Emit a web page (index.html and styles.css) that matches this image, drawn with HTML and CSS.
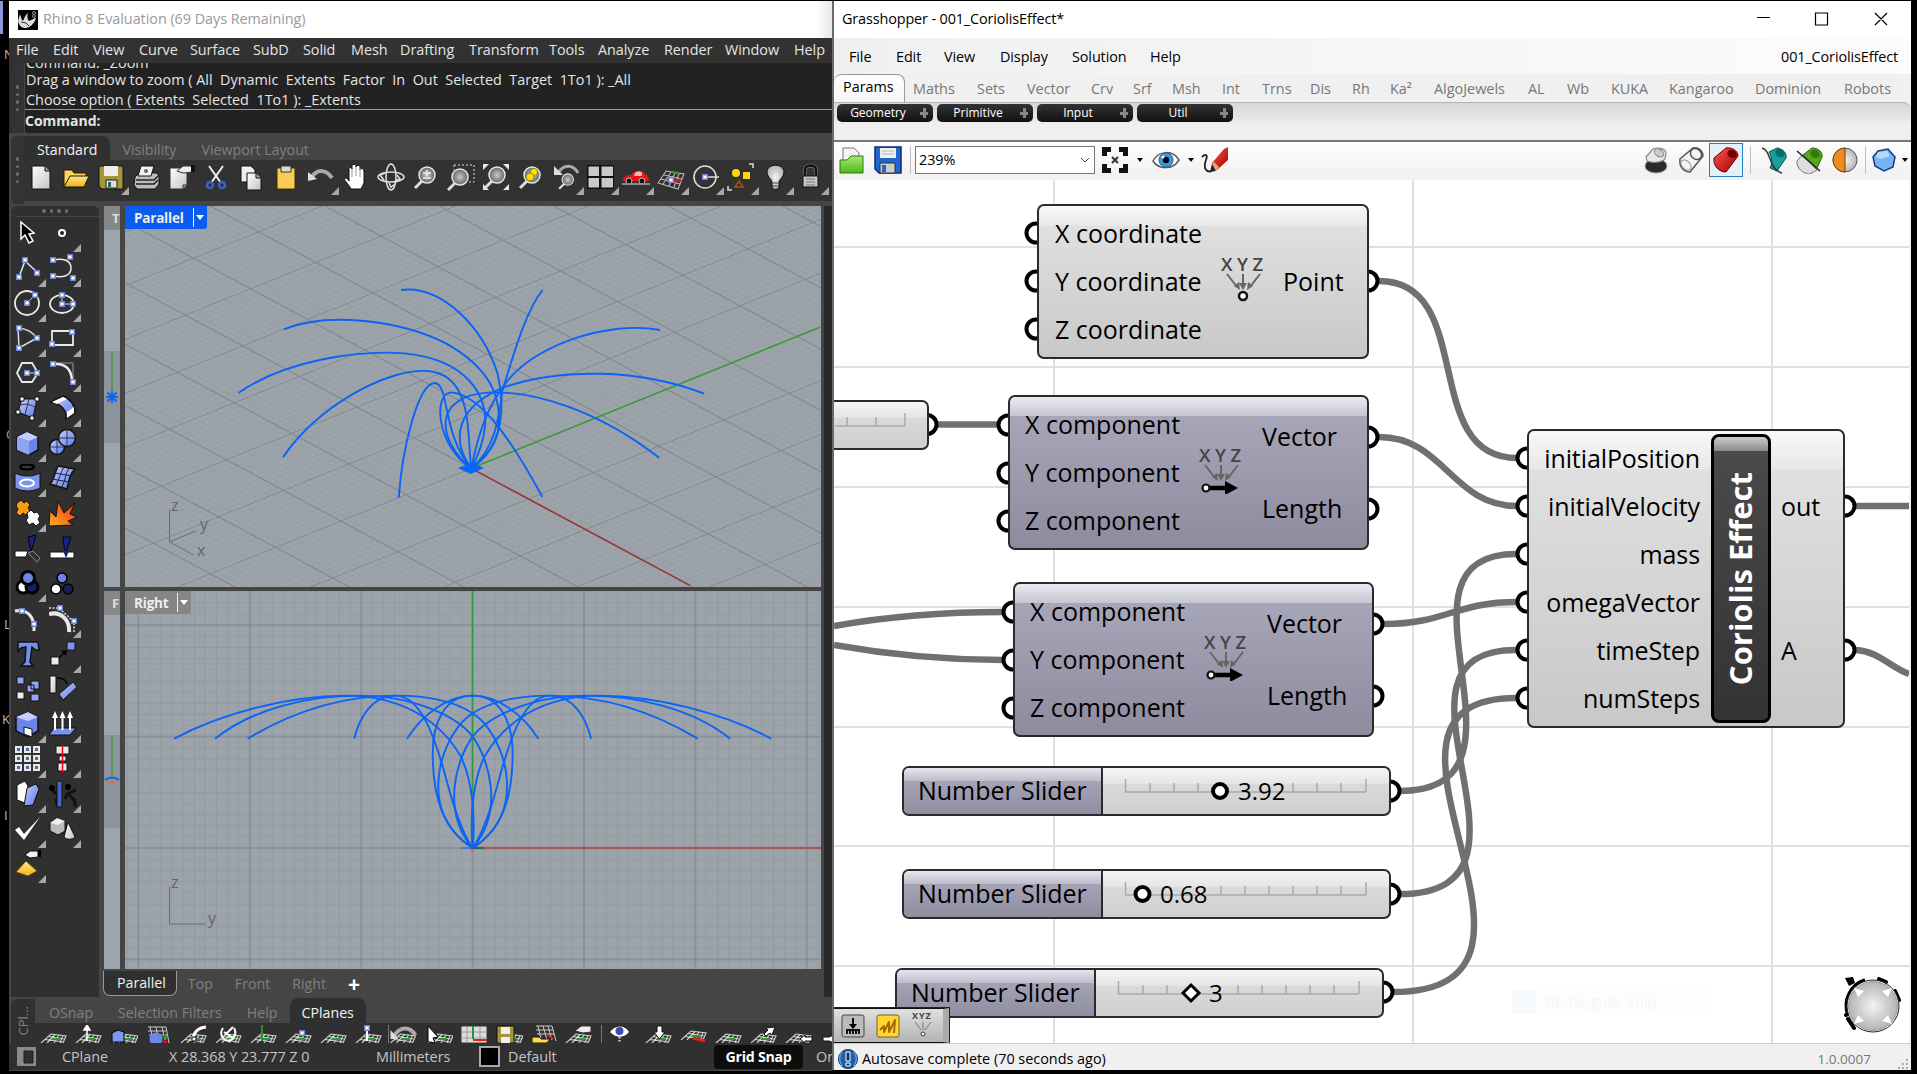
FILE: index.html
```html
<!DOCTYPE html>
<html lang="en">
<head>
<meta charset="utf-8">
<title>Rhino 8 and Grasshopper</title>
<link rel="stylesheet" href="styles.css">
</head>
<body>
<svg class="defs" width="0" height="0">
  <defs>
    <linearGradient id="gBlue" x1="0" y1="0" x2="1" y2="1"><stop offset="0" stop-color="#c3ceff"/><stop offset="1" stop-color="#5d78e6"/></linearGradient>
    <linearGradient id="gWhite" x1="0" y1="0" x2="1" y2="1"><stop offset="0" stop-color="#fff"/><stop offset="1" stop-color="#c4c4c4"/></linearGradient>
    <linearGradient id="gGold" x1="0" y1="0" x2="0" y2="1"><stop offset="0" stop-color="#ffe48a"/><stop offset="1" stop-color="#f0b41c"/></linearGradient>
    <linearGradient id="gFire" x1="1" y1="0" x2="0" y2="1"><stop offset="0" stop-color="#f02a00"/><stop offset="1" stop-color="#ffb02e"/></linearGradient>
    <linearGradient id="gGreen" x1="0" y1="0" x2="0" y2="1"><stop offset="0" stop-color="#a8ea70"/><stop offset="1" stop-color="#4fb51e"/></linearGradient>
    <linearGradient id="gRed" x1="0" y1="0" x2="1" y2="1"><stop offset="0" stop-color="#ff5548"/><stop offset="1" stop-color="#a00000"/></linearGradient>
    <radialGradient id="gLens"><stop offset="0" stop-color="#c8c8c8"/><stop offset="1" stop-color="#666"/></radialGradient>
    <radialGradient id="gKnob"><stop offset="0" stop-color="#f4f4f4"/><stop offset="1" stop-color="#b4b4b4"/></radialGradient>
    <symbol id="handle" viewBox="0 0 6 6"><path d="M.7.7h4.6v4.6H.7z" fill="#fff" stroke="#6d83d6" stroke-width="1.4"/></symbol>
    <symbol id="cgrid" viewBox="0 0 28 18"><path d="M1 18 11 9l15 2-3 7M5 14.500l19 2.500M8 11.500l17 2.500M7 18l8-8.500M14 18l5-8M20 18l3-7.500" fill="none" stroke="#d2d2d2" stroke-width="1.100"/><path d="M12 14l8 0" stroke="#2a9a32" stroke-width="2"/></symbol>
    <symbol id="lens" viewBox="0 0 28 28"><path d="M11 17 3 25" stroke="#ddd" stroke-width="3"/><circle cx="15" cy="12" r="8" fill="url(#gLens)" stroke="#e6e6e6" stroke-width="1.500"/></symbol>
    <symbol id="xyz" viewBox="0 0 44 48"><g stroke="#666" stroke-width="2" fill="none"><path d="M6 19 16 32M22 19v12M39 19 29 32"/></g><path d="m19 35-6-4 5-4zM22 35l-4-7h8zM26 35l6-4-5-4z" fill="#666"/></symbol>
    <symbol id="vecarrow" viewBox="0 0 44 48"><path d="M8 42h20" stroke="#000" stroke-width="4.500"/><path d="m26 35 13 7-13 7z"/><circle cx="7" cy="42" r="3.500" fill="#fff" stroke="#111" stroke-width="2.200"/></symbol>
  </defs>
</svg>

<div class="desktop">
  <div class="backdrop"><i class="sliver"></i><b class="l1">N</b><b class="l2">C</b><b class="l3">L</b><b class="l4">K</b><b class="l5">I</b></div>

  <section class="rhino">
    <header class="title-bar">
      <svg class="rhino-logo" viewBox="0 0 20 20"><path d="M0 0h20v20H0z" fill="#000"/><path d="M2 4c1 3 1 5 3 7 1-2 2-6 5-8-1 3-1 6 1 8 3-1 5-3 7-3-1 5-6 10-11 10-4 0-6-3-7-7z" fill="#ddd"/><path d="M3 12l5 1 3 3" stroke="#333" fill="none"/><circle cx="16" cy="3" r="1.500" fill="none" stroke="#999"/><circle cx="16" cy="6" r="1.500" fill="none" stroke="#999"/></svg>
      <span>Rhino 8 Evaluation (69 Days Remaining)</span>
    </header>
    <nav class="rhino-menu"><span>File</span><span>Edit</span><span>View</span><span>Curve</span><span>Surface</span><span>SubD</span><span>Solid</span><span>Mesh</span><span>Drafting</span><span>Transform</span><span>Tools</span><span>Analyze</span><span>Render</span><span>Window</span><span>Help</span></nav>
    <div class="command">
      <div class="grip"><i></i><i></i><i></i><i></i></div>
      <div class="history">
        <p class="old">Command: _Zoom</p>
        <p>Drag a window to zoom ( All&nbsp; Dynamic&nbsp; Extents&nbsp; Factor&nbsp; In&nbsp; Out&nbsp; Selected&nbsp; Target&nbsp; 1To1 ): _All</p>
        <p>Choose option ( Extents&nbsp; Selected&nbsp; 1To1 ): _Extents</p>
        <p class="prompt">Command:</p>
      </div>
    </div>
    <div class="toolbars">
      <div class="grip"><i></i><i></i><i></i><i></i></div>
      <div class="toolbar-main">
        <div class="tabs top-tabs"><span class="on">Standard</span><span>Visibility</span><span>Viewport Layout</span></div>
        <div class="tools">
          <span class="tool"><svg viewBox="0 0 28 28"><path d="M5 3h13l5 5v18H5z" fill="url(#gWhite)" stroke="#111"/><path d="M18 3v5h5" fill="#999" stroke="#111"/></svg></span>
          <span class="tool"><svg viewBox="0 0 28 28"><path d="M2 24V7h8l2 3h12v14z" fill="#ffd75a" stroke="#221800"/><path d="m2 24 6-11h19l-5 11z" fill="url(#gGold)" stroke="#221800"/></svg></span>
          <span class="tool more"><svg viewBox="0 0 28 28"><path d="M2 3h24v23H5l-3-3z" fill="#a5963c" stroke="#111"/><path d="M7 3h14v10H7z" fill="#eee"/><path d="M9 17h11v8H9z" fill="#ddd" stroke="#222"/><path d="M11 19h3v5h-3z" fill="#365"/></svg></span>
          <span class="tool"><svg viewBox="0 0 28 28"><path d="M3 14l4-4h18l2 3v8l-4 5H5l-3-4z" fill="#bdbdbd" stroke="#111"/><path d="M9 3h13l-3 10H6z" fill="#f2f2f2" stroke="#111"/><path d="M4 17h18l4-4M4 21h18l4-4" stroke="#222" stroke-width="1.500" fill="none"/><circle cx="14" cy="8" r="2" fill="#666"/></svg></span>
          <span class="tool"><svg viewBox="0 0 28 28"><path d="M3 5h17v17l-4 4H3z" fill="url(#gWhite)" stroke="#333"/><path d="M20 22h-4v4" fill="#999" stroke="#333"/><path d="m10 8 6-5 9 0v6l-8 1-4-1z" fill="#eee" stroke="#333"/><path d="M24 2h4v7h-4z" fill="#111"/></svg></span>
          <span class="tool"><svg viewBox="0 0 28 28"><path d="m7 3 12 17M21 3 9 20" stroke="#eee" stroke-width="2"/><g fill="none" stroke="#3a62c4" stroke-width="2.500"><circle cx="8" cy="22" r="3"/><circle cx="20" cy="22" r="3"/></g></svg></span>
          <span class="tool"><svg viewBox="0 0 28 28"><path d="M4 3h10l4 4v12H4z" fill="#eee" stroke="#111"/><path d="M10 10h9l5 5v12H10z" fill="url(#gWhite)" stroke="#111"/><path d="M19 10v5h5" fill="#aaa" stroke="#111"/></svg></span>
          <span class="tool"><svg viewBox="0 0 28 28"><path d="M5 5h18v21H5z" fill="#f8cd55" stroke="#422c00"/><path d="M9 3h10v6H9z" fill="#ddd" stroke="#333"/></svg></span>
          <span class="tool more"><svg viewBox="0 0 28 28"><path d="M5 14C10 6 19 6 25 15" fill="none" stroke="#aaa" stroke-width="4"/><path d="M1 9v9l9-2z" fill="#ddd"/></svg></span>
          <span class="tool"><svg viewBox="0 0 28 28"><path d="M9 26c-2-4-6-8-7-10 2-2 4 0 5 2V6c0-2 3-2 3 0V3c0-2 4-2 4 0v1c0-2 4-2 4 0v3c0-2 4-2 4 1v12l-3 6z" fill="#fff" stroke="#111"/><path d="M10 6v8M14 4v9M18 5v9" stroke="#999"/></svg></span>
          <span class="tool"><svg viewBox="0 0 28 28" fill="none" stroke="#e2e2e2" stroke-width="1.500"><ellipse cx="14" cy="14" rx="13" ry="5"/><ellipse cx="14" cy="14" rx="5" ry="13"/><path d="M8 10l-5 2 4 5M18 18l5-2-3-4M12 20l2 4 4-3"/></svg></span>
          <span class="tool"><svg viewBox="0 0 28 28"><use href="#lens"/><path d="M11 10h8M15 7v6M11 15h8" stroke="#eee" stroke-width="1.500"/></svg></span>
          <span class="tool"><svg viewBox="0 0 28 28"><path d="M7 2h20v17H18M7 2v5" fill="none" stroke="#ddd" stroke-dasharray="2 2"/><use href="#lens" x="-2" y="2"/></svg></span>
          <span class="tool"><svg viewBox="0 0 28 28"><use href="#lens"/><path d="M1 1h6L1 7zM27 1v6l-6-6zM27 27h-6l6-6zM1 27v-6l6 6z" fill="#e6e6e6"/></svg></span>
          <span class="tool"><svg viewBox="0 0 28 28"><use href="#lens"/><circle cx="17" cy="9" r="3.500" fill="#ffe000" stroke="#665500" stroke-width=".5"/><circle cx="13" cy="14" r="3.800" fill="#ffe000" stroke="#665500" stroke-width=".5"/></svg></span>
          <span class="tool more"><svg viewBox="0 0 28 28"><path d="M6 10C12 0 22 2 26 10" fill="none" stroke="#aaa" stroke-width="3"/><path d="M2 3v9h9z" fill="#ddd"/><use href="#lens" x="5" y="8" width="20" height="20"/></svg></span>
          <span class="tool more"><svg viewBox="0 0 28 28"><path d="M0 2h27v24H0z" fill="#111"/><path d="M1.500 3.500H12v9.500H1.500zM14.500 3.500H26v9.500H14.500zM1.500 15H12v9.500H1.500zM14.500 15H26v9.500H14.500z" fill="#c9c9c9"/></svg></span>
          <span class="tool more"><svg viewBox="0 0 28 28"><path d="M1 18c0-5 4-6 8-6 3-5 12-6 14-1 3 1 4 4 4 7z" fill="#e8141c"/><path d="M13 10c2-2 6-2 7 0v3h-8z" fill="#f8b8b8"/><circle cx="7" cy="18" r="3" fill="#111" stroke="#bbb"/><circle cx="20" cy="18" r="3" fill="#111" stroke="#bbb"/><path d="M0 21h28" stroke="#888" stroke-width="2"/></svg></span>
          <span class="tool more"><svg viewBox="0 0 28 28"><path d="m1 20 8-12 18 3-6 15zM4 16l19 5M7 12l18 4M6 21l8-12M12 23l6-13M17 24l5-13" fill="none" stroke="#bbb" stroke-width="1.100"/><path d="M14 9l8 1" stroke="#2aa32a" stroke-width="2"/><path d="m17 18 7-1" stroke="#d01818" stroke-width="3"/><use href="#handle" x="11" y="14" width="6" height="6"/></svg></span>
          <span class="tool more"><svg viewBox="0 0 28 28"><circle cx="13" cy="14" r="11" fill="none" stroke="#ddd" stroke-width="1.500"/><path d="M13 14h14" stroke="#ddd" stroke-width="1.500"/><use href="#handle" x="10" y="11" width="6" height="6"/></svg></span>
          <span class="tool more"><svg viewBox="0 0 28 28"><path d="M22 1h4v4M5 27H1v-4" fill="none" stroke="#ddd" stroke-width="1.500"/><circle cx="9" cy="10" r="4" fill="#ffd800"/><path d="M16 9h7v7h-7z" fill="#ffd800"/><path d="m12 18 4 6H8z" fill="none" stroke="#a5560c" stroke-width="1.500"/></svg></span>
          <span class="tool more"><svg viewBox="0 0 28 28"><path d="M10 19c-1-4-5-5-5-10C5 0 22 0 22 9c0 5-4 6-5 10v5c0 3-7 3-7 0z" fill="url(#gKnob)" stroke="#111"/><path d="M10 20h7M10 23h7" stroke="#444"/></svg></span>
          <span class="tool more"><svg viewBox="0 0 28 28"><path d="M8 14V7c0-6 11-6 11 0v7" fill="none" stroke="#777" stroke-width="4"/><path d="M8 14V7c0-6 11-6 11 0v7" fill="none" stroke="#111" stroke-width="2.500"/><path d="M6 13h15v11H6z" fill="#c8c8c8" stroke="#111"/><path d="M9 16h9M9 19h9M9 22h9" stroke="#777"/></svg></span>
        </div>
      </div>
    </div>

    <div class="workspace">
      <aside class="palette">
        <div class="grip flat"><i></i><i></i><i></i><i></i></div>
        <div class="palette-grid">
          <span class="tool"><svg viewBox="0 0 28 28"><path d="M7 3v17l4-4 4 8 4-2-4-7 5-1z" fill="#000" stroke="#fff" stroke-width="1.500"/></svg></span>
          <span class="tool more"><svg viewBox="0 0 28 28"><circle cx="13" cy="14" r="3" fill="#222" stroke="#fff" stroke-width="2"/></svg></span>
          <span class="tool more"><svg viewBox="0 0 28 28"><path d="M5 23 11 7l12 11" fill="none" stroke="#e8e8e8" stroke-width="1.500"/><use href="#handle" x="2" y="20" width="6" height="6"/><use href="#handle" x="8" y="3" width="6" height="6"/><use href="#handle" x="20" y="16" width="6" height="6"/></svg></span>
          <span class="tool more"><svg viewBox="0 0 28 28"><path d="M4 6c10-2 18 0 18 8s-8 10-18 8" fill="none" stroke="#e8e8e8" stroke-width="1.500"/><use href="#handle" x="1" y="3" width="6" height="6"/><use href="#handle" x="18" y="0" width="6" height="6"/><use href="#handle" x="1" y="19" width="6" height="6"/><use href="#handle" x="21" y="21" width="6" height="6"/></svg></span>
          <span class="tool more"><svg viewBox="0 0 28 28"><circle cx="13" cy="14" r="12" fill="none" stroke="#e8e8e8" stroke-width="1.800"/><path d="m14 13 7-7" stroke="#ddd"/><use href="#handle" x="10" y="11" width="6" height="6"/><use href="#handle" x="18" y="3" width="6" height="6"/></svg></span>
          <span class="tool more"><svg viewBox="0 0 28 28"><ellipse cx="13" cy="15" rx="12" ry="9" fill="none" stroke="#e8e8e8" stroke-width="1.800"/><path d="M13 6v9h12" fill="none" stroke="#ddd"/><use href="#handle" x="10" y="3" width="6" height="6"/><use href="#handle" x="10" y="12" width="6" height="6"/><use href="#handle" x="21" y="12" width="6" height="6"/></svg></span>
          <span class="tool more"><svg viewBox="0 0 28 28"><path d="M4 4c10 1 14 4 19 10L5 24z" fill="none" stroke="#ddd" stroke-width="1.500"/><use href="#handle" x="2" y="1" width="6" height="6"/><use href="#handle" x="20" y="11" width="6" height="6"/><use href="#handle" x="2" y="21" width="6" height="6"/></svg></span>
          <span class="tool more"><svg viewBox="0 0 28 28"><path d="M3 7h21v14H3z" fill="none" stroke="#e8e8e8" stroke-width="1.800"/><use href="#handle" x="20" y="5" width="6" height="6"/><use href="#handle" x="0" y="17" width="6" height="6"/></svg></span>
          <span class="tool more"><svg viewBox="0 0 28 28"><path d="m8 4h10l6 10-6 9H8l-5-9z" fill="none" stroke="#e8e8e8" stroke-width="1.800"/><path d="M14 14h8" stroke="#ddd"/><use href="#handle" x="10" y="11" width="6" height="6"/><use href="#handle" x="20" y="11" width="6" height="6"/></svg></span>
          <span class="tool more"><svg viewBox="0 0 28 28"><path d="M5 4h19v20" fill="none" stroke="#999"/><path d="M5 5c12-1 18 6 18 18" fill="none" stroke="#e8e8e8" stroke-width="2.500"/><use href="#handle" x="1" y="2" width="6" height="6"/><use href="#handle" x="21" y="20" width="6" height="6"/></svg></span>
          <span class="tool more"><svg viewBox="0 0 28 28"><path d="m8 5 15 0-4 19-15-6z" fill="url(#gBlue)" stroke="#111"/><path d="M7 11c5-2 10 0 14 2M15 5l-4 16" fill="none" stroke="#334"/><path d="M6 3h4v4H6zM21 3h4v4h-4zM2 16h4v4H2zM16 22h4v4h-4z" fill="#fff" stroke="#111"/></svg></span>
          <span class="tool more"><svg viewBox="0 0 28 28"><path d="m2 8 12-6c10 4 12 11 12 17l-9 6c1-9-5-15-15-17z" fill="url(#gBlue)" stroke="#111" stroke-width="1.500"/><path d="m3 8 11-5 4 2-10 5zM25 19l-7 5v-6l7-5z" fill="#fff"/></svg></span>
          <span class="tool more"><svg viewBox="0 0 28 28"><path d="m3 8 10-5 11 5v13l-9 5-12-5z" fill="#6a84ea" stroke="#111" stroke-width="1.500"/><path d="m3 8 10-5 11 5-9 4z" fill="#c3ceff"/><path d="M15 12v14l-12-5V8z" fill="#8ea3f4"/></svg></span>
          <span class="tool more"><svg viewBox="0 0 28 28"><g fill="url(#gBlue)" stroke="#111" stroke-width="1.500"><circle cx="8" cy="18" r="7.500"/><circle cx="18" cy="9" r="8.500"/></g><path d="M10 9h16M18 1v16M1 18h14M8 11v14" stroke="#335"/></svg></span>
          <span class="tool more"><svg viewBox="0 0 28 28"><ellipse cx="13" cy="3" rx="7" ry="2.500" fill="#333" stroke="#000" stroke-width="2"/><path d="M1 9c8 4 17 4 25 0v15c-8 4-17 4-25 0z" fill="#7d95ee" stroke="#111"/><ellipse cx="13" cy="19" rx="7" ry="3.500" fill="none" stroke="#fff" stroke-width="2"/></svg></span>
          <span class="tool more"><svg viewBox="0 0 28 28"><path d="m9 2 17 3c-4 4-5 6-8 20L1 20c4-4 4-9 8-18z" fill="url(#gBlue)" stroke="#111" stroke-width="1.500"/><path d="m6 9 17 3M3 15l17 3M15 3C11 9 11 14 7 21M20 4c-4 6-3 11-7 19" stroke="#223" fill="none"/></svg></span>
          <span class="tool more"><svg viewBox="0 0 28 28"><path d="M3 4 7 1l3 3 3-2 3 4-2 3 2 3-4 4-3-2-3 3-4-3 2-4-2-3z" fill="#f89c12" stroke="#111"/><path d="m13 14 4-3 3 3 3-1 3 4-2 3 2 4-4 3-3-3-4 2-3-5 2-2z" fill="#fff" stroke="#111"/></svg></span>
          <span class="tool"><svg viewBox="0 0 28 28"><path d="M0 27 1 12l6 6 2-16 6 12L26 4l-5 11 7 3-9 4 5 4z" fill="url(#gFire)" stroke="#111"/></svg></span>
          <span class="tool"><svg viewBox="0 0 28 28"><path d="M14 3 22 1l-5 17z" fill="#142484" stroke="#001"/><path d="M1 17h13l-2 6H1z" fill="#fff" stroke="#111"/><path d="m14 19 5-2 7 7-3 4z" fill="#333" stroke="#888"/></svg></span>
          <span class="tool"><svg viewBox="0 0 28 28"><path d="M14 3h8l-6 18z" fill="#142484" stroke="#001"/><path d="M1 18h24v6H1z" fill="#fff" stroke="#111"/><path d="m14 17 6 0-3 7z" fill="#142484"/></svg></span>
          <span class="tool more"><svg viewBox="0 0 28 28"><g stroke="#000" stroke-width="3"><circle cx="9" cy="18" r="6" fill="#fff"/><circle cx="18" cy="18" r="6" fill="#14205c"/><circle cx="14" cy="9" r="6.500" fill="#6a84ea"/></g></svg></span>
          <span class="tool"><svg viewBox="0 0 28 28"><g stroke="#000" stroke-width="1.500"><circle cx="7" cy="20" r="5" fill="#fff"/><circle cx="19" cy="20" r="5" fill="#14205c"/><circle cx="13" cy="9" r="5" fill="#6a84ea"/></g></svg></span>
          <span class="tool"><svg viewBox="0 0 28 28"><path d="M1 6c12-3 20 6 19 20" fill="none" stroke="#e8e8e8" stroke-width="3"/><use href="#handle" x="5" y="3" width="6" height="6"/><use href="#handle" x="17" y="16" width="6" height="6"/></svg></span>
          <span class="tool more"><svg viewBox="0 0 28 28"><path d="M0 9c12-3 21 6 20 18" fill="none" stroke="#e8e8e8" stroke-width="4"/><path d="M0 3h10l15 14v10" fill="none" stroke="#ddd" stroke-dasharray="2 1.500" stroke-width="1.500"/><use href="#handle" x="8" y="0" width="6" height="6"/><use href="#handle" x="22" y="13" width="6" height="6"/></svg></span>
          <span class="tool"><svg viewBox="0 0 28 28"><path d="M4 2h20l1 8h-3l-4-3-2 15 3 4H7l4-4 1-15-5 1-3 3z" fill="#7390ee" stroke="#111" stroke-width="1.500"/></svg></span>
          <span class="tool more"><svg viewBox="0 0 28 28"><path d="M9 19 17 11" stroke="#000" stroke-width="1.500"/><path d="M2 17h8v8H2z" fill="#eee" stroke="#111"/><path d="M18 2h8v8h-8z" fill="#7d95ee" stroke="#111"/><path d="m18 10-6 1 5 5z" fill="#000"/></svg></span>
          <span class="tool"><svg viewBox="0 0 28 28"><g fill="#90a5f5" stroke="#111"><path d="M3 2h7v7H3zM17 6h8v8h-8zM13 10h7v7h-7zM17 19h8v7h-8z"/><path d="M3 17h7v7H3z" fill="#eee"/></g></svg></span>
          <span class="tool"><svg viewBox="0 0 28 28"><path d="M1 1h6v17H1z" fill="url(#gWhite)" stroke="#111"/><path d="m10 19 14-12 4 5-14 13z" fill="url(#gBlue)" stroke="#111"/><path d="M8 3c5 0 9 2 10 6" fill="none" stroke="#000" stroke-width="1.500"/></svg></span>
          <span class="tool more"><svg viewBox="0 0 28 28"><path d="m2 7 12-5 10 5v14l-10 6-12-6z" fill="#6a84ea" stroke="#111" stroke-width="1.500"/><path d="m2 7 12-5 10 5-10 4z" fill="#c3ceff"/><path d="m10 17 8 2 0 8-8-3z" fill="#fff" stroke="#111"/></svg></span>
          <span class="tool more"><svg viewBox="0 0 28 28"><path d="m5 18 22 0-6 7H0z" fill="#7d95ee" stroke="#111"/><path d="M6 20V6M13.500 20V6M21 20V6" stroke="#fff" stroke-width="2"/><path d="M3 8 6 1l3 7zM10.500 8l3-7 3 7zM18 8l3-7 3 7z" fill="#fff"/></svg></span>
          <span class="tool more"><svg viewBox="0 0 28 28"><path d="M1 1h7v7H1zM10 1h7v7h-7zM19 1h7v7h-7zM1 10h7v7H1zM10 10h7v7h-7zM19 10h7v7h-7zM1 19h7v7H1zM10 19h7v7h-7zM19 19h7v7h-7z" fill="#e8e8e8"/><path d="M3 3h3v3H3zM12 3h3v3h-3zM21 3h3v3h-3zM3 12h3v3H3zM12 12h3v3h-3zM21 12h3v3h-3zM3 21h3v3H3zM12 21h3v3h-3zM21 21h3v3h-3z" fill="#5566a8"/></svg></span>
          <span class="tool more"><svg viewBox="0 0 28 28"><path d="M7 1h13v8H7zM10 11h7v5h-7zM9 18h9v8H9z" fill="#e8e8e8" stroke="#111"/><path d="M13.500 0v28" stroke="#f00016" stroke-width="1.500"/></svg></span>
          <span class="tool more"><svg viewBox="0 0 28 28"><path d="m3 5 8-4 3 5-3 17-8-3z" fill="#fff" stroke="#111"/><path d="m13 8 9-4 3 5-6 16-9 1z" fill="url(#gBlue)" stroke="#111"/></svg></span>
          <span class="tool more"><svg viewBox="0 0 28 28"><g stroke="#111" stroke-width="3" fill="none"><path d="m1 6 5 7 5 2-4 5 2 7M27 10l-9 4-2 5M19 14l6 6 2 7"/></g><circle cx="3" cy="8" r="3"/><circle cx="19" cy="7" r="3"/><path d="M8 1h5v26H8z" fill="#4364c8" stroke="#111"/></svg></span>
          <span class="tool more"><svg viewBox="0 0 28 28"><path d="M1 15l4-3 5 7L26 2 10 25z" fill="#fff"/></svg></span>
          <span class="tool more"><svg viewBox="0 0 28 28"><path d="m1 8 7-5 8 3v10l-7 4-8-4z" fill="#bbb" stroke="#111"/><path d="m1 8 7-5 8 3-7 4z" fill="#eee"/><path d="m19 7 7 15c-3 3-8 3-11 0z" fill="url(#gWhite)" stroke="#111"/></svg></span>
          <span class="tool more"><svg viewBox="0 0 28 28"><path d="m12 11 11 10-9 5-12-4z" fill="url(#gGold)" stroke="#6a4a00"/><path d="m11 5 5-4h8v6l-8 1z" fill="#eee" stroke="#111"/><path d="M24 0h3v7h-3z"/></svg></span>
        </div>
      </aside>

      <div class="viewports">
        <div class="views">
          <div class="mini">
            <em>T</em>
            <svg viewBox="0 0 16 381"><path d="M0 145h16v92H0z" fill="#8d949b"/><path d="M8 145v40" stroke="#3e9a4c" stroke-width="1.500"/><path d="M2 191h12M8 185v12M3.500 186.500l9 9M12.500 186.500l-9 9" stroke="#1464f0" stroke-width="2"/></svg>
          </div>
          <div class="view">
            <svg viewBox="125 206 696 381" preserveAspectRatio="none">
              <defs>
                <pattern id="iso" width="100" height="100" patternUnits="userSpaceOnUse" patternTransform="matrix(.652 -.2637 .5716 .3063 471.200 468.300) translate(50 50)">
                  <path d="M0 10H100M0 20H100M0 30H100M0 40H100M0 60H100M0 70H100M0 80H100M0 90H100M10 0V100M20 0V100M30 0V100M40 0V100M60 0V100M70 0V100M80 0V100M90 0V100M0 0H100M0 0V100" stroke="#8d959c" stroke-width="1.100" opacity=".6"/>
                  <path d="M0 50H100M50 0V100" stroke="#7d848b" stroke-width="1.900"/>
                </pattern>
              </defs>
              <path d="M124 206h697v381H124z" fill="#9ca3aa"/>
              <path d="M124 206h697v381H124z" fill="url(#iso)"/>
              <g class="curves" transform="translate(120 200) scale(.4592 .33333)">
                <path class="axis-y" d="M765 805 1524 382"/>
                <path class="axis-x" d="M765 805 1242 1157"/>
                <path d="M612 270C700 255 790 380 822 520C840 620 835 740 765 805"/>
                <path d="M920 270C880 340 852 490 833 570C825 660 815 750 765 805"/>
                <path d="M1176 390C1060 360 890 440 835 560C800 620 780 700 765 805"/>
                <path d="M1272 581C1130 505 960 505 840 560C730 620 720 720 765 805"/>
                <path d="M1174 773C1040 630 900 570 800 578C680 590 690 720 765 805"/>
                <path d="M920 891C860 740 790 585 722 577C680 580 690 740 765 805"/>
                <path d="M607 893C615 740 650 550 685 549C718 550 700 700 765 805"/>
                <path d="M355 772C430 620 580 505 670 513C770 525 755 700 765 805"/>
                <path d="M258 579C360 480 520 450 620 460C760 480 800 590 795 680C790 740 775 780 765 805"/>
                <path d="M357 388C450 335 610 360 710 430C800 500 830 580 825 680C820 740 790 780 765 805"/>
              </g>
              <path d="m458 468 8-3-2-3 7 2 7-2-1 3 7 3-7 3-6 3-7-3z" fill="#0a64f5"/>
              <g class="triad"><path d="M169.500 510v32l26-11M169.500 542l24 13"/><text x="171" y="511">z</text><text x="200" y="530">y</text><text x="197" y="556">x</text></g>
            </svg>
            <div class="view-label active"><span>Parallel</span><i></i></div>
          </div>
          <div class="mini low">
            <em>F</em>
            <svg viewBox="0 0 16 378"><path d="M0 144h16v93H0z" fill="#8d949b"/><path d="M8 144v44" stroke="#3e9a4c" stroke-width="1.500"/><path d="M1 189c4-3 10-3 14 0" stroke="#1464f0" stroke-width="2" fill="none"/><path d="M4 191h8" stroke="#e07030" stroke-width="2"/></svg>
          </div>
          <div class="view">
            <svg viewBox="125 591 696 378" preserveAspectRatio="none">
              <defs>
                <pattern id="ortho" x="472.600" y="848" width="111.400" height="111.400" patternUnits="userSpaceOnUse" patternTransform="translate(-55.700 -55.700)">
                  <path d="M0 11.100H112M0 22.300H112M0 33.400H112M0 44.600H112M0 66.800H112M0 78H112M0 89.100H112M0 100.300H112M0 .5H112M11.100 0V112M22.300 0V112M33.400 0V112M44.600 0V112M66.800 0V112M78 0V112M89.100 0V112M100.300 0V112M.5 0V112" stroke="#8b9298" opacity=".55"/>
                  <path d="M0 55.700H112M55.700 0V112" stroke="#788086"/>
                </pattern>
              </defs>
              <path d="M124 591h697v378H124z" fill="#9ca3aa"/>
              <path d="M124 591h697v378H124z" fill="url(#ortho)"/>
              <path d="M472.500 591v257" stroke="#2f9a3a" stroke-width="1.500"/>
              <path d="M472.500 848H821" stroke="#b08080" stroke-width="3"/><path d="M472.500 848H821" stroke="#8c3a3a"/>
              <g class="curves" transform="translate(120 580) scale(.4592 .33333)">
                <g id="half">
                  <path d="M118 476C220 400 370 347 490 347C620 347 700 430 741 527C765 590 775 700 768 804"/>
                  <path d="M207 476C290 385 410 347 520 347C640 347 735 410 768 470C800 530 840 690 768 804"/>
                  <path d="M278 476C370 400 480 347 600 347C680 347 735 370 768 400C830 450 900 690 768 804"/>
                  <path d="M510 476C522 410 550 347 600 347C660 347 690 500 705 570C722 660 745 760 768 804"/>
                  <path d="M625 476C660 400 715 347 768 347C830 347 855 430 855 520C855 660 830 750 768 804"/>
                </g>
                <use href="#half" transform="translate(1536 0) scale(-1 1)"/>
              </g>
              <path d="M461 848h12" stroke="#0a64f5"/><path d="M473 848h11" stroke="#107070" stroke-width="2"/><path d="M470 849h5l-2.500 4z" fill="#e07030"/>
              <g class="triad"><path d="M169.500 887v37h36"/><text x="171" y="888">z</text><text x="208" y="924">y</text></g>
            </svg>
            <div class="view-label"><span>Right</span><i></i></div>
          </div>
        </div>
        <div class="tabs view-tabs"><span class="on">Parallel</span><span>Top</span><span>Front</span><span>Right</span><b>+</b></div>
      </div>
      <div class="side-dock"></div>
    </div>

    <div class="bottom-dock">
      <div class="side-tab"><span>CPl...</span></div>
      <div class="dock-main">
        <div class="tabs dock-tabs"><span>OSnap</span><span>Selection Filters</span><span>Help</span><span class="on">CPlanes</span></div>
        <div class="cplane-tools">
          <svg viewBox="0 0 28 18"><use href="#cgrid"/></svg>
          <svg viewBox="0 0 28 18"><use href="#cgrid"/><path d="M12 16V3M9 5l3-5 3 5z" stroke="#fff" fill="#fff" stroke-width="1.500"/></svg>
          <svg viewBox="0 0 28 18"><use href="#cgrid" x="2"/><path d="m2 8 6-3 6 2v10H2z" fill="#7d95ee" stroke="#000"/></svg>
          <svg viewBox="0 0 28 18"><path d="M3 2h18l3 16M5 2l3 12M11 2l2 10M17 2l3 13M3 6h18M4 10h18" stroke="#ccc" fill="none"/><circle cx="11" cy="14" r="6.500" fill="#6d88ea"/><path d="m18 10 4 4" stroke="#2a9a32" stroke-width="3"/><path d="M18 17h4" stroke="#d11" stroke-width="3"/></svg>
          <svg viewBox="0 0 28 18"><use href="#cgrid"/><path d="M13 16c0-8 4-13 13-14" stroke="#fff" stroke-width="3" fill="none"/><path d="M12 12h4v4h-4z" fill="#fff" stroke="#000"/></svg>
          <svg viewBox="0 0 28 18"><use href="#cgrid"/><path d="M8 3c-5 7 2 15 8 12 5-3 5-9 3-12M10 10l8-8M9 7l9 6" stroke="#fff" stroke-width="2" fill="none"/></svg>
          <svg viewBox="0 0 28 18"><use href="#cgrid"/><path d="M12 0v16" stroke="#1f9a2a" stroke-width="2"/></svg>
          <svg viewBox="0 0 28 18"><use href="#cgrid"/><use href="#handle" x="14" y="5" width="6" height="6"/></svg>
          <svg viewBox="0 0 28 18"><use href="#cgrid"/></svg>
          <svg viewBox="0 0 28 18"><use href="#cgrid"/><path d="M12 4v12" stroke="#fff" stroke-width="2"/><use href="#handle" x="9" y="0" width="6" height="6"/></svg>
          <svg class="ruled" viewBox="0 0 28 18"><use href="#cgrid"/><path d="M4 12C10 1 20 1 26 10" fill="none" stroke="#aaa" stroke-width="4"/><path d="M1 5v9h8z" fill="#ddd"/></svg>
          <svg viewBox="0 0 28 18"><use href="#cgrid" x="2"/><path d="m3 1 10 11-5 1 2 5-5-1-2 0z" fill="#fff" stroke="#000"/></svg>
          <svg viewBox="0 0 28 18"><path d="M1 1h26v17H1z" fill="#ddd" stroke="#333"/><path d="M1 7h26M1 13h26M7 1v17M20 1v17" stroke="#999"/><path d="M13 1v13" stroke="#1f9a2a" stroke-width="2"/><path d="M13 15h14" stroke="#d22" stroke-width="2"/></svg>
          <svg viewBox="0 0 28 18"><use href="#cgrid" x="2"/><path d="M2 1h17v17H2z" fill="#a5963c" stroke="#111"/><path d="M6 2h9v7H6zM6 12h9v6H6z" fill="#eee"/></svg>
          <svg viewBox="0 0 28 18"><path d="M6 1h16l4 15M8 1l3 13M13 1l4 14M18 1l4 14M6 5h17M7 9h17" stroke="#ccc" fill="none"/><path d="M2 18v-6h7l2 2h9l-3 4z" fill="#ffd75a" stroke="#221800"/><path d="M18 10l5 4" stroke="#d22" stroke-width="2"/></svg>
          <svg viewBox="0 0 28 18"><use href="#cgrid"/><path d="m10 6 6-5 10 0v6l-8 1-4-1z" fill="#eee" stroke="#333"/></svg>
          <svg class="ruled eye" viewBox="0 0 28 18"><path d="M4 7c6-8 15-8 20 0-5 7-14 7-20 0z" fill="#fff" stroke="#222"/><circle cx="14" cy="6" r="4" fill="#3a4cb0"/><path d="M14 12v6" stroke="#ddd" stroke-dasharray="1.500 1.500" stroke-width="2"/></svg>
          <svg viewBox="0 0 28 18"><use href="#cgrid"/><path d="M12 1h5v6h3l-5.500 7L9 7h3z" fill="#fff" stroke="#111"/></svg>
          <svg viewBox="0 0 28 18"><use href="#cgrid" y="-3"/><path d="m13 13 12 3" stroke="#d22" stroke-width="3"/></svg>
          <svg viewBox="0 0 28 18"><use href="#cgrid"/></svg>
          <svg viewBox="0 0 28 18"><use href="#cgrid"/><path d="m25 2-3 8-2-2-4 3-2-2 4-4-2-2z" fill="#fff" stroke="#111"/></svg>
          <svg viewBox="0 0 28 18"><use href="#cgrid"/><path d="m15 14 5-4v2h7v4h-7v2z" fill="#fff" stroke="#111"/></svg>
          <svg viewBox="0 0 28 18"><path d="m15 14-5-4v2H3v4h7v2z" fill="#fff" stroke="#111"/></svg>
        </div>
      </div>
    </div>
    <footer class="rhino-status">
      <svg viewBox="0 0 19 19"><path d="M0 0h19v19H0z" fill="#8a8a8a"/><path d="M7 4h9v12H7z" fill="#303030" stroke="#1c1c1c"/></svg>
      <span>CPlane</span><span>X 28.368 Y 23.777 Z 0</span><span>Millimeters</span><span class="layer"><i></i>Default</span><b>Grid Snap</b><span class="cut">Ortho</span>
    </footer>
  </section>

  <section class="gh">
    <header class="gh-title"><span>Grasshopper - 001_CoriolisEffect*</span>
      <svg viewBox="0 0 132 14" fill="none" stroke="#000" stroke-width="1.200"><path d="M0 5.500h13M58.500 1h12v12h-12zM118 1l12 12M130 1l-12 12"/></svg>
    </header>
    <nav class="gh-menu"><span>File</span><span>Edit</span><span>View</span><span>Display</span><span>Solution</span><span>Help</span><strong>001_CoriolisEffect</strong></nav>
    <div class="gh-tabs"><span class="on">Params</span><span>Maths</span><span>Sets</span><span>Vector</span><span>Crv</span><span>Srf</span><span>Msh</span><span>Int</span><span>Trns</span><span>Dis</span><span>Rh</span><span>Ka²</span><span>AlgoJewels</span><span>AL</span><span>Wb</span><span>KUKA</span><span>Kangaroo</span><span>Dominion</span><span>Robots</span></div>
    <div class="ribbon"><button>Geometry<i></i></button><button>Primitive<i></i></button><button>Input<i></i></button><button>Util<i></i></button></div>
    <div class="gh-toolbar">
      <svg class="i-open" viewBox="0 0 25 28"><path d="M4 2h11l5 5v10H4z" fill="#f4f4f4" stroke="#777"/><path d="M1 14h7l4-4h12v17H1z" fill="url(#gGreen)" stroke="#2c7a10"/></svg>
      <svg class="i-save" viewBox="0 0 28 28"><path d="M1 1h26v26H5l-4-4z" fill="#2166cf" stroke="#0c2c70" stroke-width="1.500"/><path d="M6 2h16v10H6z" fill="#eee"/><path d="M8 5h12M8 8h12" stroke="#bbb"/><path d="M6 17h15v10H6z" fill="#ccc" stroke="#333"/><path d="M8 19h4v7H8z" fill="#2166cf"/></svg>
      <hr>
      <div class="combo">239%<svg viewBox="0 0 10 6"><path d="m1 1 4 4 4-4" fill="none" stroke="#444"/></svg></div>
      <svg class="i-fit" viewBox="0 0 28 28"><g fill="none" stroke="#111" stroke-width="5"><path d="M10 3.500H3.500V10M18 3.500h6.500V10M10 24.500H3.500V18M18 24.500h6.500V18"/></g><path d="m11 11 6 6M17 11l-6 6" stroke="#333" stroke-width="2"/></svg>
      <s></s>
      <svg class="i-eye" viewBox="0 0 28 20"><path d="M1 11C7 0 21 0 27 10 21 20 7 20 1 11z" fill="#fff" stroke="#556" stroke-width="1.500"/><circle cx="14" cy="10" r="7" fill="#3e9ad8" stroke="#1c5c94"/><circle cx="14" cy="10" r="3.200" fill="#001"/><circle cx="11" cy="7" r="1.500" fill="#fff"/></svg>
      <s></s>
      <svg class="i-pen" viewBox="0 0 28 28"><path d="M1 11c4-4 6-2 4 3-3 8 0 13 6 11" fill="none" stroke="#222" stroke-width="1.800"/><path d="m11 17 12-14 4-2 0 13-11 10-6 1z" fill="url(#gRed)"/><path d="m9 26 2-8 4 7z" fill="#222"/><path d="m11 18 2-2 5 5-3 4z" fill="#d8a878"/></svg>
      <span class="fill"></span>
      <svg class="i-mode" viewBox="0 0 28 28"><ellipse cx="14" cy="20" rx="11" ry="7" fill="#2a2a2a" stroke="#999"/><path d="m4 11 7-8c4-2 12-1 13 4l-1 6c-4 4-13 4-18 2z" fill="#e8e8e8" stroke="#888" stroke-width="1.200"/><ellipse cx="17" cy="7" rx="5" ry="3.500" transform="rotate(30 17 7)" fill="#ccc" stroke="#888"/></svg>
      <svg class="i-mode" viewBox="0 0 28 28"><path d="m3 13 13-11c6-1 10 3 10 8L13 26c-6 0-11-5-10-13z" fill="#f4f4f4" stroke="#555" stroke-width="1.500"/><ellipse cx="19" cy="8" rx="6" ry="5" transform="rotate(45 19 8)" fill="none" stroke="#555" stroke-width="1.500"/><ellipse cx="9" cy="19" rx="6" ry="4" transform="rotate(45 9 19)" fill="none" stroke="#999"/></svg>
      <span class="picked"><svg class="i-mode" viewBox="0 0 28 28"><path d="m2 12 12-10c6-1 12 3 12 8L14 26C7 26 1 20 2 12z" fill="url(#gRed)" stroke="#600"/><ellipse cx="20" cy="8" rx="5" ry="4" transform="rotate(35 20 8)" fill="#700"/></svg></span>
      <hr>
      <svg class="i-mode" viewBox="0 0 28 28"><path d="m8 6 8-4c6 1 10 5 9 10L16 25l-7-3c3-6 2-10-1-16z" fill="#14a29a" stroke="#065550"/><ellipse cx="19" cy="7" rx="5" ry="4" transform="rotate(35 19 7)" fill="#067068"/><path d="M1 2c10 3 6 21 20 25" stroke="#333" fill="none" stroke-width="1.500"/></svg>
      <svg class="i-mode" viewBox="0 0 28 28"><path d="m1 15 5-6 15 15-7 4C7 28 0 22 1 15z" fill="#ddd" stroke="#777"/><path d="m7 9 9-7c6 0 11 4 10 9l-5 11z" fill="#54a81c" stroke="#285c08"/><path d="m1 5 23 20" stroke="#222" stroke-width="1.500"/><ellipse cx="19" cy="8" rx="5" ry="4" transform="rotate(35 19 8)" fill="#2f7a0a"/></svg>
      <svg class="i-mode" viewBox="0 0 28 28"><circle cx="14" cy="14" r="12" fill="url(#gKnob)" stroke="#555"/><path d="M14 2a12 12 0 0 0 0 24z" fill="#ee8b20" stroke="#7a3c00"/></svg>
      <hr>
      <svg class="i-mode" viewBox="0 0 28 28"><path d="m8 5 10-2 7 8-2 10-9 4-9-5-2-9z" fill="#78b4f4" stroke="#1c3c84" stroke-width="1.500"/><path d="m8 6 9-1 3 5-9 3-5-2z" fill="#c4e2ff" opacity=".8"/></svg>
      <s></s>
    </div>

    <div class="canvas">
      <svg class="wires" viewBox="834 180 1075 863">
        <path class="grid" d="M1054 180v863M1413 180v863M1772 180v863M834 247h1075M834 367h1075M834 487h1075M834 607h1075M834 727h1075M834 846h1075M834 966h1075"/>
        <g class="wire">
          <path d="M938 424.500h60"/>
          <path d="M834 626C890 616 940 612 1003 612M834 645C890 655 940 660 1003 660"/>
          <path d="M1379 281C1477 281 1419 458 1517 458"/>
          <path d="M1379 437C1444 437 1452 506 1517 506"/>
          <path d="M1384 624C1446 624 1455 602 1517 602"/>
          <path d="M1400 791C1552 791 1374 554 1516 554"/>
          <path d="M1400 894C1566 894 1362 650 1516 650"/>
          <path d="M1393 992C1597 992 1328 698 1516 698"/>
          <path d="M1856 506h53M1856 650C1878 651 1890 667 1909 674"/>
        </g>
        <g class="port">
          <circle cx="1036" cy="233" r="9.500"/><circle cx="1036" cy="281" r="9.500"/><circle cx="1036" cy="329" r="9.500"/><circle cx="1368" cy="281" r="9.500"/>
          <circle cx="927" cy="424.500" r="9.500"/>
          <circle cx="1008" cy="425" r="9.500"/><circle cx="1008" cy="473" r="9.500"/><circle cx="1008" cy="521" r="9.500"/><circle cx="1368" cy="437" r="9.500"/><circle cx="1368" cy="509" r="9.500"/>
          <circle cx="1013" cy="612" r="9.500"/><circle cx="1013" cy="660" r="9.500"/><circle cx="1013" cy="708" r="9.500"/><circle cx="1373" cy="624" r="9.500"/><circle cx="1373" cy="696" r="9.500"/>
          <circle cx="1527" cy="458" r="9.500"/><circle cx="1527" cy="506" r="9.500"/><circle cx="1527" cy="554" r="9.500"/><circle cx="1527" cy="602" r="9.500"/><circle cx="1527" cy="650" r="9.500"/><circle cx="1527" cy="698" r="9.500"/><circle cx="1845" cy="506" r="9.500"/><circle cx="1845" cy="650" r="9.500"/>
          <circle cx="1390" cy="791" r="9.500"/><circle cx="1390" cy="894" r="9.500"/><circle cx="1383" cy="992" r="9.500"/>
        </g>
      </svg>

      <article class="node n-point"><div class="ins"><span>X coordinate</span><span>Y coordinate</span><span>Z coordinate</span></div>
        <div class="glyph"><span>XYZ</span><svg viewBox="0 0 44 48"><use href="#xyz"/><circle cx="22" cy="41" r="4" fill="#fff" stroke="#111" stroke-width="2.500"/></svg></div>
        <div class="outs"><span>Point</span></div></article>
      <article class="node violet n-vec1"><div class="ins"><span>X component</span><span>Y component</span><span>Z component</span></div>
        <div class="glyph"><span>XYZ</span><svg viewBox="0 0 44 48"><use href="#xyz"/><use href="#vecarrow"/></svg></div>
        <div class="outs"><span>Vector</span><span>Length</span></div></article>
      <article class="node violet n-vec2"><div class="ins"><span>X component</span><span>Y component</span><span>Z component</span></div>
        <div class="glyph"><span>XYZ</span><svg viewBox="0 0 44 48"><use href="#xyz"/><use href="#vecarrow"/></svg></div>
        <div class="outs"><span>Vector</span><span>Length</span></div></article>
      <article class="node n-script"><div class="ins"><span>initialPosition</span><span>initialVelocity</span><span>mass</span><span>omegaVector</span><span>timeStep</span><span>numSteps</span></div>
        <div class="capsule"><span>Coriolis Effect</span></div>
        <div class="outs"><span>out</span><span>A</span></div></article>

      <div class="slider s-left"><svg viewBox="0 0 92 46"><path class="ticks" d="M0 24h70M12 15v9M41 15v9M70 11v13"/></svg></div>
      <div class="slider s1"><label>Number Slider</label><div class="track"><svg viewBox="0 0 286 46"><path class="ticks" d="M22 24h241M22.500 11v13M47 15v9M71 15v9M95 15v9M190 15v9M214 15v9M238 15v9M263 11v13"/><circle class="knob" cx="117" cy="23" r="7"/></svg><output>3.92</output></div></div>
      <div class="slider s2"><label>Number Slider</label><div class="track"><svg viewBox="0 0 286 46"><path class="ticks" d="M22 24h241M22.500 11v13M118 15v9M142 15v9M166 15v9M190 15v9M214 15v9M238 15v9M263 11v13"/><circle class="knob" cx="39.500" cy="23" r="7"/></svg><output>0.68</output></div></div>
      <div class="slider s3"><label>Number Slider</label><div class="track"><svg viewBox="0 0 286 46"><path class="ticks" d="M22 24h241M22.500 11v13M47 15v9M71 15v9M142 15v9M166 15v9M190 15v9M214 15v9M238 15v9M263 11v13"/><path class="knob" d="m95 15 8 8-8 8-8-8z"/></svg><output>3</output></div></div>

      <div class="ghost"><i></i>Rectangular Snip</div>
      <svg class="compass" viewBox="0 0 60 60"><path d="m4 3 8-1 2 6-6 3z"/><path d="M7 40A27 27 0 0 1 24 5" fill="none" stroke="#000" stroke-width="3.500"/><path d="M38 4l7 3M54 16l4 9M5 40l2-1M7 44l6 9" fill="none" stroke="#000" stroke-width="4" stroke-linecap="round"/><circle cx="32" cy="31" r="26" fill="#fff" stroke="#222"/><circle cx="32" cy="31" r="24.500" fill="url(#gKnob)" stroke="#999"/><path d="m13 13 10 3-6 6zM51 13l-10 3 6 6zM13 49l4-9 6 6zM51 49l-10-3 6-6z" fill="#fff"/></svg>
      <div class="shelf">
        <svg viewBox="0 0 24 24"><rect x="1" y="1" width="22" height="22" rx="2" fill="#bbb" stroke="#444"/><path d="M12 4v7M5 16h14M6 16v4M9 16v4M12 16v4M15 16v4M18 16v4" stroke="#111" stroke-width="2"/><path d="M8 10h8l-4 5z"/></svg>
        <svg viewBox="0 0 24 24"><rect x="1" y="1" width="22" height="22" rx="2" fill="#ffd633" stroke="#7a6320"/><path d="m4 16 4-4 0 6 5-10 0 10 6-12-1 13" fill="none" stroke="#a86a00" stroke-width="2" stroke-linejoin="round"/></svg>
        <div class="tiny"><span>XYZ</span><svg viewBox="0 0 24 24"><path d="m4 9 6 8M12 9v8M20 9l-6 8" stroke="#777" fill="none"/><circle cx="12" cy="21" r="2" fill="#fff" stroke="#333"/></svg></div>
      </div>
    </div>
    <footer class="gh-status"><svg viewBox="0 0 20 20"><circle cx="10" cy="10" r="9.500" fill="#1d5fa8" stroke="#0c3464"/><path d="M4 3c-3 5-3 9 0 14M16 3c3 5 3 9 0 14" stroke="#8cc0ee" fill="none"/><path d="M8 3h4v9H8zM8 14h4v3H8z" fill="#14306c" stroke="#fff"/></svg><span>Autosave complete (70 seconds ago)</span><em>1.0.0007</em><svg class="sizer" viewBox="0 0 12 12"><path d="M9 1h2v2H9zM5 5h2v2H5zM9 5h2v2H9zM1 9h2v2H1zM5 9h2v2H5zM9 9h2v2H9z" fill="#aaa"/></svg></footer>
  </section>
</div>
</body>
</html>
```
FILE: styles.css
```css
* { box-sizing: border-box; }
body { margin: 0; overflow: hidden; background: #000; font: 14.4px/20px "Open Sans", "Noto Sans", sans-serif; }
p { margin: 0; }
svg { display: block; flex: none; }
.defs { position: absolute; }
.desktop { display: flex; width: 1917px; height: 1074px; padding-top: 1px; background: #000; }
.backdrop { position: relative; width: 9px; overflow: hidden; }
.backdrop .sliver { position: absolute; left: 0; top: 0; width: 3px; height: 33px; background: #8a97d8; }
.backdrop b { position: absolute; left: 4px; font-weight: 400; font-size: 13px; color: #bbb; }
.l1 { top: 43px; } .backdrop .l2 { top: 423px; left: 6px; color: #8ac; } .l3 { top: 613px; } .backdrop .l4 { top: 708px; left: 2px; } .l5 { top: 804px; }

/* Rhino window */
.rhino { display: flex; flex-direction: column; width: 823px; height: 1070px; overflow: hidden; background: #454545; color: #e4e4e4; }
.title-bar { display: flex; align-items: center; gap: 5px; height: 37px; padding-left: 9px; background: linear-gradient(90deg, #fff 98%, #e8e8e8); color: #999; }
.title-bar span { letter-spacing: -.04px; margin-top: -1px; }
.rhino-logo { width: 20px; height: 20px; }
.rhino-menu { display: grid; grid-template-columns: 37px 40px 46px 51px 63px 50px 48px 49px 69px 80px 49px 66px 61px 69px 40px; height: 25px; padding: 0 0 2px 7px; align-items: center; background: #323232; letter-spacing: -.05px; }
.grip { display: flex; flex-direction: column; align-items: center; justify-content: center; gap: 4px; width: 13px; margin-left: 2px; background: #333; border-radius: 6px 0 0 6px; }
.grip i { width: 3.500px; height: 3.500px; border-radius: 50%; background: #6d6d6d; }
.command { display: flex; height: 70px; background: #2e2e2e; }
.history { flex: 1; overflow: hidden; padding-left: 1px; background: #222; border-left: 1px solid #484848; }
.history p { height: 20px; line-height: 20px; white-space: pre; }
.history .old { height: 7px; line-height: 0; }
.history .prompt { margin: -1px 0 0 -1px; height: 25px; line-height: 22px; border-top: 1px solid #999; font-weight: 700; font-size: 14px; }
.toolbars { display: flex; height: 68px; margin-top: 3px; }
.toolbar-main { flex: 1; }
.tabs { display: flex; color: #808080; }
.tabs .on { color: #f2f2f2; background: #303030; }
.top-tabs { height: 24px; font-size: 14.200px; }
.top-tabs span { padding: 4px 13px 0 12px; }
.top-tabs .on { border-radius: 0 8px 0 0; padding: 4px 13px 0 13px; }
.top-tabs span:nth-child(3) { padding-left: 12px; }
.tools { display: flex; height: 41px; background: #323232; }
.tool { position: relative; width: 35px; height: 35px; padding: 3px 0 0 3px; }
.tool svg { width: 28px; height: 28px; }
.tool.more::after { content: ""; position: absolute; right: 0; bottom: 0; border: 4px solid; border-color: transparent #a8a8a8 #a8a8a8 transparent; }
.workspace { display: flex; height: 793px; padding-top: 2px; }
.palette { width: 88px; margin: 0 5px 0 2px; background: #303030; border-radius: 6px 6px 0 0; }
.grip.flat { flex-direction: row; width: auto; margin: 0; height: 11px; background: none; border-bottom: 1px solid #444; }
.palette-grid { display: grid; grid-template-columns: 35px 35px; grid-auto-rows: 35.050px; }
.palette .tool { padding: 2px 0 0 3px; }
.viewports { width: 718px; }
.views { display: grid; grid-template-columns: 16px 696px; grid-template-rows: 381px 378px; gap: 4px 5px; height: 763px; }
.mini, .view { position: relative; overflow: hidden; background: #9ca5ad; }
.mini em { position: absolute; inset: 0 0 auto 0; height: 24px; background: #888; color: #ddd; font: 700 13px/24px "Open Sans", sans-serif; padding-left: 8px; overflow: hidden; }
.mini svg { width: 16px; height: 100%; }
.view svg { width: 696px; height: 100%; }
.view-label { position: absolute; left: 0; top: 0; display: flex; align-items: center; height: 23px; padding: 0 3px 0 9px; background: #858585; color: #eee; font-weight: 700; font-size: 13.500px; border-radius: 0 0 3px 0; letter-spacing: -.2px; }
.view-label.active { background: #0a5cf0; }
.view-label i { display: flex; align-items: center; height: 19px; margin-left: 9px; padding-left: 2px; border-left: 1px solid #eee; }
.view-label i::after { content: ""; border: 4.500px solid transparent; border-top: 5px solid #fff; border-bottom: 0; }
.curves path { fill: none; stroke: #0a64f5; stroke-width: 1.900px; vector-effect: non-scaling-stroke; }
.curves .axis-y { stroke: #3c9a3c; stroke-width: 1.600px; }
.curves .axis-x { stroke: #9c3436; stroke-width: 1.600px; }
.triad path { fill: none; stroke: #666d74; }
.triad text { fill: #5f666d; font: 16px "Open Sans", sans-serif; }
.view-tabs { height: 25px; margin: 2px 0 0 -1px; font-size: 14.200px; }
.view-tabs span { padding: 3px 11px; }
.view-tabs .on { padding: 2px 10px 2px 13px; border: 1px solid #999; border-top: 0; border-radius: 0 0 7px 7px; }
.view-tabs b { color: #fff; font-size: 21px; padding: 2px 11px; line-height: 22px; }
.side-dock { flex: 1; margin-left: 2px; background: #292929; }
.bottom-dock { display: flex; height: 46px; padding-top: 1px; }
.side-tab { width: 24px; margin: 1px 0 0 2px; background: #303030; border-radius: 6px 0 0 0; color: #808080; display: flex; align-items: center; justify-content: center; }
.side-tab span { writing-mode: vertical-rl; transform: rotate(180deg); font-size: 13px; }
.dock-main { flex: 1; overflow: hidden; }
.dock-tabs { height: 25px; padding-left: 1px; font-size: 14.200px; }
.dock-tabs span { padding: 5px 12px 0 13px; height: 25px; }
.dock-tabs .on { border-radius: 8px 8px 0 0; padding: 5px 12px 0; }
.cplane-tools { display: flex; height: 20px; padding: 2px 0 0 5px; gap: 7px; background: #303030; overflow: hidden; }
.cplane-tools svg { width: 28px; height: 18px; }
.cplane-tools .ruled { border-left: 1px solid #777; margin-left: -2px; width: 30px; }
.cplane-tools .eye { margin-left: 1px; width: 36px; margin-right: 1px; }
.rhino-status { display: grid; grid-template-columns: 45px 107px 207px 103px 235px 102px 60px; align-items: center; height: 27px; padding-left: 8px; background: #303030; color: #c4c4c4; white-space: nowrap; }
.rhino-status svg { width: 19px; height: 19px; }
.rhino-status span { letter-spacing: -.05px; }
.layer { display: flex; align-items: center; gap: 8px; }
.layer i { width: 21px; height: 21px; background: #000; border: 2px solid #aaa; }
.rhino-status b { width: 89px; height: 24px; border-radius: 4px; background: #0d0d0d; color: #fff; text-align: center; line-height: 23px; font-size: 14.200px; letter-spacing: -.25px; }

/* Grasshopper window */
.gh { display: flex; flex-direction: column; width: 1079px; height: 1069px; background: #f0f0f0; border-left: 2px solid #6a6a6a; color: #000; }
.gh-title { display: flex; justify-content: space-between; height: 37px; padding: 8px 22px 0 8px; background: #fff; letter-spacing: -.12px; }
.gh-title svg { width: 132px; height: 14px; margin-top: 3px; }
.gh-menu { display: grid; grid-template-columns: 47px 48px 56px 72px 78px 40px 1fr; align-items: center; height: 36px; padding: 1px 13px 0 15px; background: linear-gradient(90deg, #f0f0f0, #fcfcfc); letter-spacing: -.1px; }
.gh-menu strong { font-weight: 400; text-align: right; letter-spacing: -.1px; }
.gh-tabs { display: grid; grid-template-columns: 79px 64px 50px 64px 42px 39px 50px 40px 48px 42px 38px 44px 94px 39px 44px 58px 86px 89px 60px; height: 28px; color: #777; line-height: 30px; }
.gh-tabs .on { width: 71px; padding-left: 9px; line-height: 24px; background: linear-gradient(#fff, #f4f4f4); border: 1px solid #999; border-left: 0; border-bottom: 0; border-radius: 8px 8px 0 0; color: #000; }
.ribbon { display: flex; gap: 4px; height: 38px; padding: 1px 3px; border-top: 1px solid #b4b4b4; border-radius: 0 8px 0 0; background: linear-gradient(#d6d6d6, #efefef 60%); }
.ribbon button { position: relative; width: 96px; height: 18px; padding: 0 14px 0 0; border: 0; border-radius: 5px; background: linear-gradient(#333, #111); color: #fff; font: 12px/15px "Open Sans", sans-serif; }
.ribbon button { display: block; padding-bottom: 2px; }
.ribbon button i { position: absolute; right: 5px; top: 4px; width: 8px; height: 10px; background: linear-gradient(#888, #888) center/3px 100% no-repeat, linear-gradient(#888, #888) center/100% 3px no-repeat; }
.gh-toolbar { display: flex; align-items: center; height: 40px; padding: 0 2px 2px 5px; border-top: 2px solid #777; background: linear-gradient(#fdfdfd, #f0f0f0); }
.gh-toolbar hr { width: 1px; height: 28px; margin: 0; border: 0; background: #c0c0c0; }
.gh-toolbar s { width: 0; border: 3px solid transparent; border-top: 4px solid #000; border-bottom: 0; }
.i-open { width: 25px; height: 28px; margin-right: 10px; } .i-save { width: 28px; height: 28px; margin-right: 8px; }
.combo { display: flex; align-items: center; justify-content: space-between; width: 180px; height: 28px; margin: 0 6px 0 4px; padding: 0 4px 0 3px; border: 1px solid #777; background: #fff; letter-spacing: -.1px; }
.combo svg { width: 10px; height: 6px; }
.i-fit { width: 28px; height: 28px; margin-right: 8px; } .i-eye { width: 28px; height: 20px; margin: 0 8px 0 9px; }
.i-pen { width: 28px; height: 28px; margin-left: 7px; }
.fill { flex: 1; }
.i-mode { width: 28px; height: 28px; margin-right: 7px; }
.picked { margin: 0 7px 0 -3px; padding: 2px; height: 34px; width: 34px; border: 1px solid #2a7fc4; background: #e4f1fb; }
.picked + hr { margin-right: 10px; }
.i-mode + hr { margin: 0 4px 0 -1px; }
.gh-toolbar .i-mode:nth-last-child(2) { margin-right: 4px; }
.i-mode + s { margin-right: 1px; }

.canvas { position: relative; width: 1075px; height: 863px; overflow: hidden; background: #fff; }
.wires { width: 1075px; height: 863px; }
.grid { stroke: #dfdfdf; stroke-width: 2; }
.wire { fill: none; stroke: #707070; stroke-width: 6.500; }
.port circle { fill: #fff; stroke: #000; stroke-width: 4; }
.node { position: absolute; display: flex; padding: 3px 0; border: 2px solid #2a2a2a; border-radius: 7px; background: linear-gradient(#f8f8f8, #e8e8e8 13%, #e0e0e0 13%, #c8c8c8); font-size: 25px; line-height: 30px; }
.violet { background: linear-gradient(#eaeaf2, #c6c6d2 12.500%, #a7a6b8 12.500%, #8d8b9d); }
.ins, .outs { display: flex; flex-direction: column; }
.ins span, .outs span { flex: 1; display: flex; align-items: center; white-space: nowrap; padding-bottom: 1px; }
.glyph { display: flex; flex-direction: column; width: 44px; }
.glyph span { font: 600 18.500px/20px "Open Sans", sans-serif; letter-spacing: 4.500px; color: #444; white-space: nowrap; }
.glyph svg { width: 44px; height: 48px; margin-top: -19px; overflow: visible; }
.n-point { left: 203px; top: 24px; width: 332px; height: 155px; }
.n-point .ins { padding-left: 16px; width: 182px; } .n-point .glyph { margin-top: 45px; } .n-point .outs { margin-left: 18px; }
.n-vec1 { left: 174px; top: 215px; width: 361px; height: 155px; }
.n-vec2 { left: 179px; top: 402px; width: 361px; height: 155px; }
.violet .ins { padding-left: 15px; width: 189px; } .violet .glyph { margin-top: 45px; } .violet .outs { margin-left: 19px; }
.n-script { left: 693px; top: 249px; width: 318px; height: 299px; }
.n-script .ins { width: 171px; } .n-script .ins span { justify-content: flex-end; letter-spacing: -.1px; }
.n-script .outs { margin-left: 10px; }
.capsule { display: flex; align-items: center; justify-content: center; width: 60px; margin: 0 0 0 11px; border: 3px solid #000; border-radius: 8px; background: linear-gradient(#ccc, #8a8a8a 5%, #4a4a4a 5%, #333); color: #fff; }
.capsule span { writing-mode: vertical-rl; transform: rotate(180deg); font-weight: 700; font-size: 31px; line-height: 36px; white-space: nowrap; margin-right: 2px; }
.slider { position: absolute; display: flex; width: 489px; height: 50px; border: 2px solid #2a2a2a; border-radius: 7px; overflow: hidden; background: linear-gradient(#f6f6f6, #e4e4e4 35%, #dadada 35%, #cfcfcf); }
.slider label { width: 200px; padding-left: 14px; font-size: 25px; line-height: 44px; border-right: 2px solid #2a2a2a; background: linear-gradient(#e6e6ee, #bdbccb 28%, #a5a4b6 28%, #8f8da0); letter-spacing: -.05px; }
.track { position: relative; display: flex; }
.track svg, .s-left svg { width: 286px; height: 46px; }
.track output { position: absolute; top: 0; font-size: 24px; line-height: 45px; }
.ticks { fill: none; stroke: #aaa; stroke-width: 1.500; }
.knob { fill: #fff; stroke: #000; stroke-width: 4; }
path.knob { stroke-width: 3; }
.s-left { left: -300px; width: 395px; top: 220px; justify-content: flex-end; } .s-left svg { width: 92px; }
.s1 { left: 68px; top: 586px; } .s1 output { left: 135px; }
.s2 { left: 68px; top: 689px; } .s2 output { left: 57px; }
.s3 { left: 61px; top: 788px; } .s3 output { left: 113px; }
.ghost { position: absolute; left: 678px; top: 810px; display: flex; align-items: center; gap: 10px; width: 200px; height: 24px; background: #fcfdfe; color: #f4f5f6; font-size: 14px; }
.ghost i { width: 24px; height: 24px; background: #f8fbfd; }
.compass { position: absolute; left: 1007px; top: 795px; width: 60px; height: 60px; }
.shelf { position: absolute; left: 0; bottom: 0; display: flex; align-items: center; gap: 11px; width: 115px; height: 35px; padding-left: 7px; border: 1px solid #111; border-left: 0; border-right: 6px solid #aaa; background: linear-gradient(#e0e0e0, #b4b4b4); outline: 1px solid #222; }
.shelf > svg { width: 24px; height: 24px; }
.tiny { position: relative; width: 24px; height: 24px; margin-top: -2px; }
.tiny span { position: absolute; left: 1px; top: -4px; font: 700 9px/14px "Open Sans", sans-serif; letter-spacing: 1px; color: #444; }
.tiny svg { width: 24px; height: 24px; }
.gh-status { display: flex; align-items: center; flex: 1; padding: 4px 2px 0 4px; border-top: 1px solid #ccc; }
.gh-status svg { width: 20px; height: 20px; margin-right: 4px; }
.gh-status em { margin-left: auto; font-style: normal; font-size: 13.500px; color: #777; }
.gh-status .sizer { width: 12px; height: 12px; margin: 10px 0 0 26px; }
```
